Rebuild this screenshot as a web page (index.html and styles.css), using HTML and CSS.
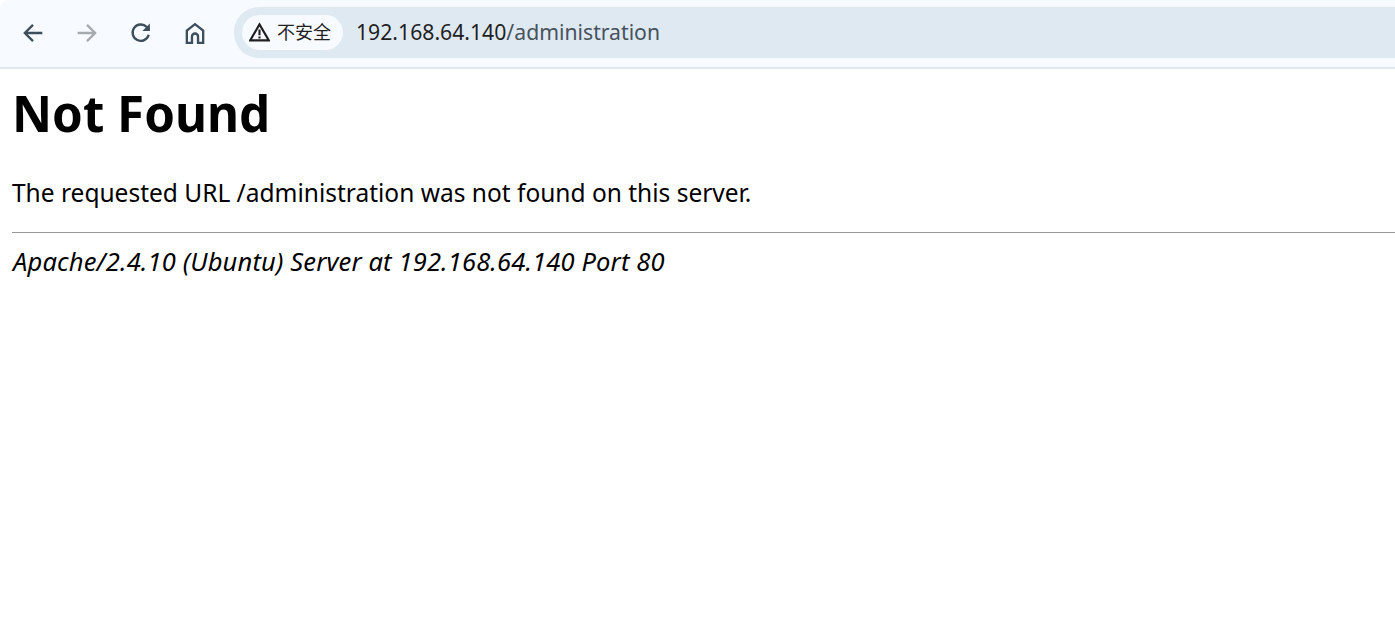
FILE: index.html
```html
<!DOCTYPE html>
<html lang="en">

<head>
    <meta charset="UTF-8">
    <title>Not Found</title>
    <link rel="stylesheet" href="styles.css">
</head>

<body>
    <div class="toolbar">
        <div class="nav">
            <svg class="icon" viewBox="0 0 24 24"><path d="M20 12H5M12 5l-7 7 7 7" /></svg>
            <svg class="icon disabled" viewBox="0 0 24 24"><path d="M4 12h15M12 5l7 7-7 7" /></svg>
            <svg class="icon" viewBox="0 0 24 24"><path d="M18.600 13.500a7 7 0 1 1-1.700-6.600L19 9" /><path class="fill" d="M19.600 3.800v6.400h-6.400z" /></svg>
            <svg class="icon" viewBox="0 0 24 24"><path d="M5 20.500V10l7-5.600 7 5.600v10.500h-4.400V15a2.600 2.600 0 0 0-5.200 0v5.500z" /></svg>
        </div>
        <div class="omnibox">
            <div class="chip">
                <svg class="warn" viewBox="0 0 22 20"><path d="M11 2 1.200 18.800h19.600zM11 7.500v6M11 14.800v2" /></svg>
                <span class="chip-text">不安全</span>
            </div>
            <div class="url">192.168.64.140<span class="path">/administration</span></div>
        </div>
    </div>

    <div class="page">
        <h1>Not Found</h1>
        <p>The requested URL /administration was not found on this server.</p>
        <hr>
        <address>Apache/2.4.10 (Ubuntu) Server at 192.168.64.140 Port 80</address>
    </div>
</body>

</html>
```

FILE: styles.css
```css
/* styles.css */
body {
    margin: 0;
    background-color: #fff;
    color: #000;
    font-family: "Noto Sans", "Noto Sans CJK SC", sans-serif;
}

.toolbar {
    height: 69px;
    box-sizing: border-box;
    display: flex;
    align-items: flex-start;
    padding-top: 7px;
    background-color: #f7faff;
    border-bottom: 2px solid #dfe7ef;
    border-top-left-radius: 8px;
}

.nav {
    width: 234px;
    height: 51px;
    flex-shrink: 0;
    display: flex;
    align-items: center;
    gap: 26px;
    padding-left: 19px;
    box-sizing: border-box;
}

.icon {
    width: 28px;
    height: 28px;
    flex-shrink: 0;
    fill: none;
    stroke: #3d4e5c;
    stroke-width: 2;
}

.icon .fill {
    fill: #3d4e5c;
    stroke: none;
}

.icon.disabled {
    stroke: #a6abb0;
}

.omnibox {
    flex: 1;
    height: 51px;
    display: flex;
    align-items: center;
    gap: 13px;
    padding-left: 8px;
    background-color: #dfe9f2;
    border-radius: 25px 0 0 25px;
}

.chip {
    width: 101px;
    height: 35px;
    box-sizing: border-box;
    display: flex;
    align-items: center;
    gap: 7px;
    padding-left: 7px;
    background-color: #f7faff;
    border-radius: 18px;
    font-size: 18px;
    color: #1f1f1f;
}

.chip-text {
    line-height: 24px;
    margin-top: -1px;
}

.warn {
    width: 21px;
    height: 20px;
    margin-top: -2px;
    fill: none;
    stroke: #1f1f1f;
    stroke-width: 2.2;
}

.url {
    font-size: 21.2px;
    line-height: 28px;
    margin-top: -2px;
    color: #1f1f1f;
}

.path {
    color: #47525c;
}

.page {
    padding: 0 0 0 13px;
}

h1 {
    margin: 11px 0 0 -1px;
    font-size: 49.3px;
    line-height: 66px;
    font-weight: 700;
}

p {
    margin: 30px 0 0 -1px;
    font-size: 24.5px;
    line-height: 34px;
}

hr {
    margin: 22px 0 0 -1px;
    border: none;
    border-top: 1px solid #9a9a9a;
}

address {
    margin-top: 11px;
    font-size: 25.5px;
    line-height: 34px;
    letter-spacing: 0.15px;
    font-style: italic;
}
```
